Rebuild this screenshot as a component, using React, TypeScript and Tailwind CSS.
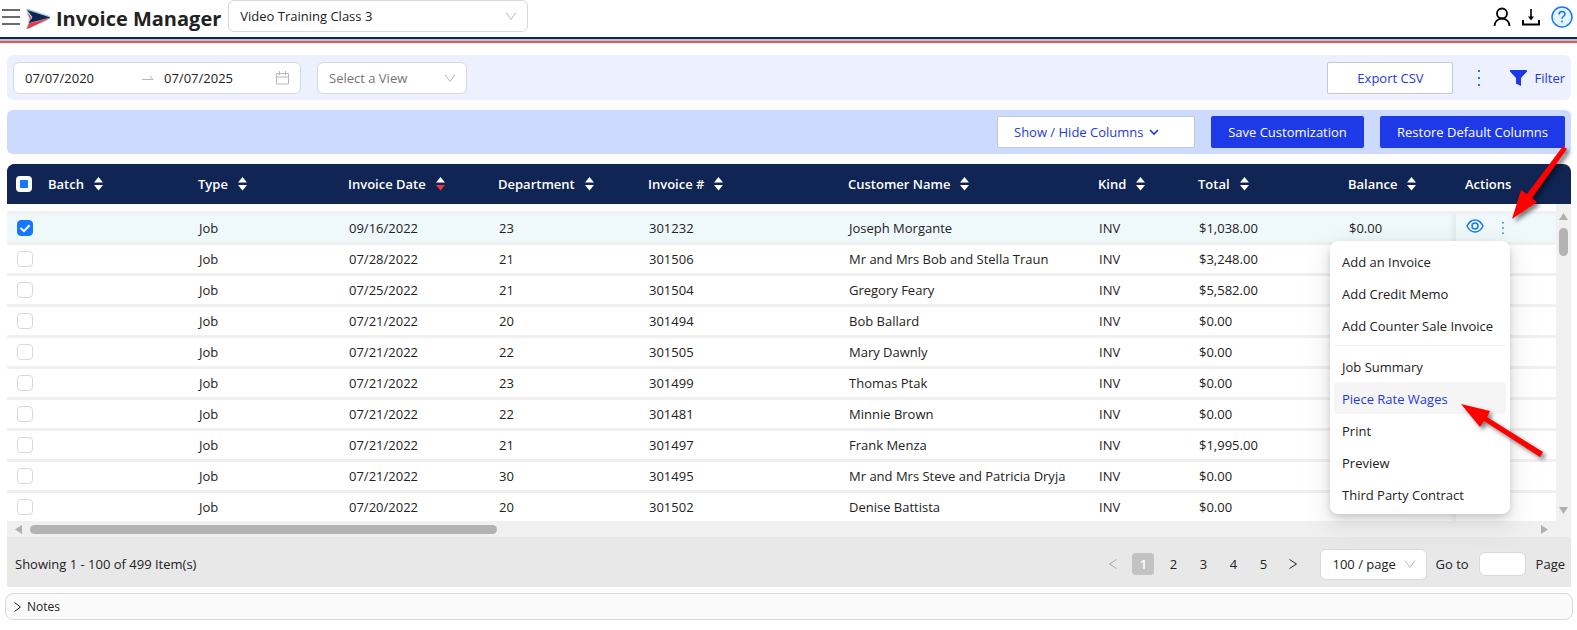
import React, { useState } from 'react';

interface Invoice {
  type: string;
  date: string;
  department: string;
  number: string;
  customer: string;
  kind: string;
  total: string;
  balance: string;
}

const row = (date: string, department: string, number: string, customer: string, total = '$0.00', balance = ''): Invoice => ({
  type: 'Job', date, department, number, customer, kind: 'INV', total, balance,
});

const invoices: Invoice[] = [
  row('09/16/2022', '23', '301232', 'Joseph Morgante', '$1,038.00', '$0.00'),
  row('07/28/2022', '21', '301506', 'Mr and Mrs Bob and Stella Traun', '$3,248.00'),
  row('07/25/2022', '21', '301504', 'Gregory Feary', '$5,582.00'),
  row('07/21/2022', '20', '301494', 'Bob Ballard'),
  row('07/21/2022', '22', '301505', 'Mary Dawnly'),
  row('07/21/2022', '23', '301499', 'Thomas Ptak'),
  row('07/21/2022', '22', '301481', 'Minnie Brown'),
  row('07/21/2022', '21', '301497', 'Frank Menza', '$1,995.00'),
  row('07/21/2022', '30', '301495', 'Mr and Mrs Steve and Patricia Dryja'),
  row('07/20/2022', '20', '301502', 'Denise Battista'),
];

const columns = [
  { title: 'Batch', width: 'w-[150px]' },
  { title: 'Type', width: 'w-[150px]' },
  { title: 'Invoice Date', width: 'w-[150px]', sorted: true },
  { title: 'Department', width: 'w-[150px]' },
  { title: 'Invoice #', width: 'w-[200px]' },
  { title: 'Customer Name', width: 'w-[250px]' },
  { title: 'Kind', width: 'w-[100px]' },
  { title: 'Total', width: 'w-[150px]' },
  { title: 'Balance', width: '' },
];

const menuItems = [
  'Add an Invoice',
  'Add Credit Memo',
  'Add Counter Sale Invoice',
  '-',
  'Job Summary',
  'Piece Rate Wages',
  'Print',
  'Preview',
  'Third Party Contract',
];

const Chevron = () => (
  <svg width="12" height="12" viewBox="0 0 12 12" fill="none" stroke="#b8b8b8" className="pointer-events-none absolute right-[11px]">
    <path d="M1 2.500 6 9.500 11 2.500" />
  </svg>
);

const SortIcon = ({ sorted }: { sorted?: boolean }) => (
  <svg width="9" height="14" viewBox="0 0 9 14">
    <path d="M4.500 0 9 5.500H0Z" fill="#fff" />
    <path d="M4.500 13.500 9 8H0Z" fill={sorted ? '#f5333f' : '#fff'} />
  </svg>
);

const Dots = ({ size }: { size: number }) => (
  <svg width="4" height={size} viewBox="0 0 4 16" fill="#1677ff">
    <rect x="1" y="0" width="2" height="2" />
    <rect x="1" y="7" width="2" height="2" />
    <rect x="1" y="14" width="2" height="2" />
  </svg>
);

const Header = () => (
  <header>
    <div className="flex h-[37px] items-start justify-between pl-[2px] pr-1">
      <div className="flex items-start">
        <button aria-label="Menu" className="mt-2">
          <svg width="18" height="18" viewBox="0 0 18 18" stroke="#6b6b6b" strokeWidth="2">
            <path d="M0 2h18M0 9h18M0 16h18" />
          </svg>
        </button>
        <svg width="25" height="21" viewBox="0 0 25 21" className="ml-[6px] mt-[9px]">
          <path d="M0 0 3 8 2 14 0 20 2 20 24 10 24 7 3 0Z" fill="#a5d0d8" />
          <path d="M1 4 5 8 3 14 6 13Z" fill="#f5333f" />
          <path d="M24.500 9 3 14.500 1 20Z" fill="#f5333f" />
          <path d="M1 1 24.500 8.500 3 14 6.500 8Z" fill="#102554" />
        </svg>
        <h1 className="ml-[5px] mt-[5px] text-[20px] leading-[28px] font-bold text-[#222]">Invoice Manager</h1>
        <div className="relative ml-[7px] flex w-[300px] items-center">
          <select aria-label="Company" className="h-8 w-full appearance-none rounded-md border border-[#d9d9d9] bg-white px-[11px]">
            <option>Video Training Class 3</option>
          </select>
          <Chevron />
        </div>
      </div>
      <div className="mt-[6px] flex items-center gap-[11px]">
        <button aria-label="Account">
          <svg width="18" height="20" viewBox="0 0 18 20" fill="none" stroke="#000" strokeWidth="1.800">
            <circle cx="9" cy="6.500" r="5" />
            <path d="M1.500 19c0-4 3-7.500 7.500-7.500s7.500 3.500 7.500 7.500" />
          </svg>
        </button>
        <button aria-label="Downloads">
          <svg width="18" height="18" viewBox="0 0 18 18" fill="none" stroke="#000" strokeWidth="2">
            <path d="M1 12v4.500h16V12" />
            <path d="M9 1v9" strokeWidth="1.600" />
            <path d="M6 8.500h6l-3 4Z" fill="#000" stroke="none" />
          </svg>
        </button>
        <button aria-label="Help">
          <svg width="22" height="22" viewBox="0 0 22 22" fill="none" stroke="#1677ff" strokeWidth="1.500">
            <circle cx="11" cy="11" r="10" fill="#e6f4ff" />
            <path d="M8 8.500c0-4 6-4 6-.5 0 2.200-3 2.300-3 5" />
            <path d="M11 14.500v2" />
          </svg>
        </button>
      </div>
    </div>
    <div className="h-[2px] bg-[#102554]" />
    <div className="h-[2px] bg-[#a5cdd3]" />
    <div className="h-[2px] bg-[#f2505c]" />
  </header>
);

const FilterBar = () => (
  <div className="flex h-[45px] items-center justify-between rounded-md bg-[#ecf0ff] px-[6px]">
    <div className="flex gap-4">
      <div className="flex h-8 w-[288px] items-center rounded-md border border-[#d9d9d9] bg-white px-[11px]">
        <input aria-label="Start date" defaultValue="07/07/2020" className="w-[107px] outline-none" />
        <svg width="12" height="12" viewBox="0 0 12 12" fill="none" stroke="#b8b8b8" className="mx-[10px]">
          <path d="M0 7.500h11L8 4" />
        </svg>
        <input aria-label="End date" defaultValue="07/07/2025" className="w-0 flex-1 outline-none" />
        <svg width="13" height="14" viewBox="0 0 13 14" fill="none" stroke="#b8b8b8">
          <path d="M.5 2.500h12v10.500H.5ZM.5 6h12M3.500 0v4M9.500 0v4" />
        </svg>
      </div>
      <div className="relative flex w-[150px] items-center">
        <select aria-label="View" className="h-8 w-full appearance-none rounded-md border border-[#d9d9d9] bg-white px-[11px] text-[#757575]">
          <option>Select a View</option>
        </select>
        <Chevron />
      </div>
    </div>
    <div className="flex items-center text-[#1d39e3]">
      <button className="h-8 w-[126px] rounded-[2px] border border-[#c8c8c8] bg-white">Export CSV</button>
      <button aria-label="More" className="mr-[29px] ml-6"><Dots size={16} /></button>
      <button className="flex items-center gap-[7px]">
        <svg width="17" height="16" viewBox="0 0 17 16" fill="#1d39e3">
          <path d="M0 0h17v1.500L11 8v8L6 13.500V8L0 1.500Z" />
        </svg>
        Filter
      </button>
    </div>
  </div>
);

const ColumnBar = () => (
  <div className="mt-[10px] flex h-[44px] items-center justify-end gap-4 rounded-md bg-[#ccdaff] px-[6px]">
    <button className="flex h-8 w-[198px] items-center gap-[6px] rounded-[2px] border border-[#c8c8c8] bg-white px-4 text-[#1d39e3]">
      Show / Hide Columns
      <svg width="10" height="8" viewBox="0 0 10 8" fill="none" stroke="#1d39e3" strokeWidth="1.600">
        <path d="M1 2l4 4 4-4" />
      </svg>
    </button>
    <button className="h-8 w-[153px] rounded-[2px] bg-[#1d39e8] text-white">Save Customization</button>
    <button className="h-8 w-[185px] rounded-[2px] bg-[#1d39e8] text-white">Restore Default Columns</button>
  </div>
);

const ActionMenu = () => (
  <div role="menu" className="absolute top-[27px] right-[46px] z-10 w-[180px] rounded-lg bg-white p-1 shadow-[0_6px_16px_rgba(0,0,0,0.08),0_3px_6px_rgba(0,0,0,0.12),0_9px_28px_8px_rgba(0,0,0,0.05)]">
    {menuItems.map((item, i) =>
      item === '-' ? (
        <hr key={i} className="my-1 border-[#f0f0f0]" />
      ) : (
        <button
          key={i}
          role="menuitem"
          className={`block h-8 w-full rounded px-2 pt-px text-left whitespace-nowrap ${item === 'Piece Rate Wages' ? 'bg-[#f5f5f5] text-[#1d39e3]' : 'text-[#222]'}`}
        >
          {item}
        </button>
      )
    )}
  </div>
);

const InvoiceTable = () => {
  const [selected, setSelected] = useState<string[]>(['301232']);

  const toggle = (id: string) =>
    setSelected(selected.includes(id) ? selected.filter((s) => s !== id) : [...selected, id]);

  return (
    <div className="mt-[10px]">
      <div className="flex">
        <table className="w-0 flex-1 table-fixed border-separate border-spacing-0 text-left">
          <thead>
            <tr className="h-10 bg-[#102554] text-white">
              <th className="w-[33px] rounded-tl-lg bg-[#102554] pl-[9px]">
                <input
                  type="checkbox"
                  aria-label="Select all"
                  className="block size-4 appearance-none rounded border-4 border-white bg-[#1677ff]"
                />
              </th>
              {columns.map((c) => (
                <th key={c.title} className={`px-2 font-semibold ${c.width}`}>
                  <span className="flex items-center gap-[10px]">
                    {c.title}
                    <SortIcon sorted={c.sorted} />
                  </span>
                </th>
              ))}
              <th className="w-[100px] px-[9px] font-semibold">Actions</th>
            </tr>
          </thead>
          <tbody>
            <tr>
              <td colSpan={11} className="h-[10px] border-b-[3px] border-[#f0f0f0]" />
            </tr>
            {invoices.map((inv, i) => {
              const checked = selected.includes(inv.number);
              const cells = ['', inv.type, inv.date, inv.department, inv.number, inv.customer, inv.kind, inv.total, inv.balance];
              const line = i < invoices.length - 1 ? 'h-[31px] border-b-[3px] border-[#f0f0f0]' : 'h-[28px]';
              return (
                <tr key={inv.number} className={checked ? 'bg-[#eff8fa]' : 'bg-white'}>
                  <td className={`pl-[10px] ${line}`}>
                    <label className="relative flex size-4">
                      <input
                        type="checkbox"
                        aria-label={`Select invoice ${inv.number}`}
                        checked={checked}
                        onChange={() => toggle(inv.number)}
                        className="size-4 appearance-none rounded border border-[#d9d9d9] bg-white checked:border-[#1677ff] checked:bg-[#1677ff]"
                      />
                      {checked && (
                        <svg viewBox="0 0 16 16" fill="none" stroke="#fff" strokeWidth="2" className="pointer-events-none absolute inset-0">
                          <path d="M3.500 8 7 11.200 12.500 5.200" />
                        </svg>
                      )}
                    </label>
                  </td>
                  {cells.map((cell, j) => (
                    <td key={j} className={`truncate px-[9px] ${line}`}>{cell}</td>
                  ))}
                  <td className={`relative px-[10px] ${line}`}>
                    <div className="absolute inset-y-0 -left-2 w-2 bg-linear-to-l from-black/5 to-transparent" />
                    {i === 0 && (
                      <>
                        <div className="flex items-center gap-[17px]">
                          <button aria-label="View invoice" className="pb-1">
                            <svg width="18" height="14" viewBox="0 0 18 14" fill="none" stroke="#1677ff" strokeWidth="1.500">
                              <path d="M1 7c4-8 12-8 16 0-4 8-12 8-16 0Z" />
                              <circle cx="9" cy="7" r="3" />
                            </svg>
                          </button>
                          <button aria-label="Actions"><Dots size={12} /></button>
                        </div>
                        <ActionMenu />
                      </>
                    )}
                  </td>
                </tr>
              );
            })}
          </tbody>
        </table>
        {/* vertical scroll gutter */}
        <div className="flex w-[15px] flex-col bg-[#f0f0f0]">
          <div className="bg-white"><div className="h-10 rounded-tr-lg bg-[#102554]" /></div>
          <div className="flex flex-1 flex-col items-center pt-[9px] pb-[7px]">
            <svg width="9" height="7" fill="#b0b0b0"><path d="M4.500 0 9 7H0Z" /></svg>
            <div className="mt-2 h-7 w-[9px] rounded-full bg-[#b3b3b3]" />
            <svg width="9" height="7" fill="#b0b0b0" className="mt-auto"><path d="M4.500 7 9 0H0Z" /></svg>
          </div>
        </div>
      </div>
      <div className="flex h-4 items-center bg-[#f0f0f0] pr-[23px] pl-2">
        <svg width="7" height="9" fill="#b0b0b0"><path d="M0 4.500 7 0V9Z" /></svg>
        <div className="ml-2 h-[9px] w-[467px] rounded-full bg-[#b3b3b3]" />
        <svg width="7" height="9" fill="#b0b0b0" className="ml-auto"><path d="M7 4.500 0 0V9Z" /></svg>
      </div>
    </div>
  );
};

const Pager = () => (
  <div className="flex h-[50px] items-center justify-between bg-[#e8e8e8] pt-1 pr-[6px] pl-2">
    <span>Showing 1 - 100 of 499 Item(s)</span>
    <div className="flex items-center">
      <button aria-label="Previous page" className="mr-2 flex size-[22px] items-center justify-center">
        <svg width="8" height="10" viewBox="0 0 8 10" fill="none" stroke="#a8a8a8"><path d="M7.500 .5.500 5l7 4.500" /></svg>
      </button>
      {[1, 2, 3, 4, 5].map((n) => (
        <button
          key={n}
          className={`mr-2 size-[22px] rounded ${n === 1 ? 'bg-[#c2c2c2] font-semibold text-white' : ''}`}
        >
          {n}
        </button>
      ))}
      <button aria-label="Next page" className="flex size-[22px] items-center justify-center">
        <svg width="8" height="10" viewBox="0 0 8 10" fill="none" stroke="#222"><path d="M.5.500 7.500 5l-7 4.500" /></svg>
      </button>
      <div className="relative ml-4 flex w-[107px] items-center">
        <select aria-label="Page size" className="h-[31px] w-full appearance-none rounded-md border border-[#d9d9d9] bg-white px-[11px]">
          <option>100 / page</option>
        </select>
        <Chevron />
      </div>
      <label className="ml-2 flex items-center gap-[10px]">
        Go to
        <input className="h-6 w-[47px] rounded-md border border-[#d9d9d9] bg-white px-2" />
        Page
      </label>
    </div>
  </div>
);

/* red pointers that call out the row menu and its wages entry */
const Callouts = () => (
  <svg width="137" height="340" viewBox="1440 130 137 340" fill="#f00" className="pointer-events-none absolute top-[130px] right-0 z-20 drop-shadow-[3px_3px_2px_rgba(0,0,0,0.5)]">
    <path d="M1512 219 1521 190 1527 194 1563 146 1567 149 1532 198 1537 202Z" />
    <path d="M1461 404 1490 411 1487 417 1543 452 1540 457 1484 421 1480 427Z" />
  </svg>
);

const App: React.FC = () => (
  <div className="relative min-h-screen bg-white font-['Open_Sans','Noto_Sans',sans-serif] text-[13px] leading-[20px] text-[#222]">
    <Header />
    <main className="pt-3 pr-[6px] pl-[7px]">
      <FilterBar />
      <ColumnBar />
      <InvoiceTable />
      <Pager />
    </main>
    <details className="mt-[6px] mr-1 ml-[5px] rounded-lg border border-[#d9d9d9] bg-[#fafafa]">
      <summary className="flex h-[25px] items-center gap-[6px] px-2 text-[12px]">
        <svg width="7" height="10" viewBox="0 0 7 10" fill="none" stroke="#222"><path d="M.5.500 6.500 5l-6 4.500" /></svg>
        Notes
      </summary>
    </details>
    <Callouts />
  </div>
);

export default App;
